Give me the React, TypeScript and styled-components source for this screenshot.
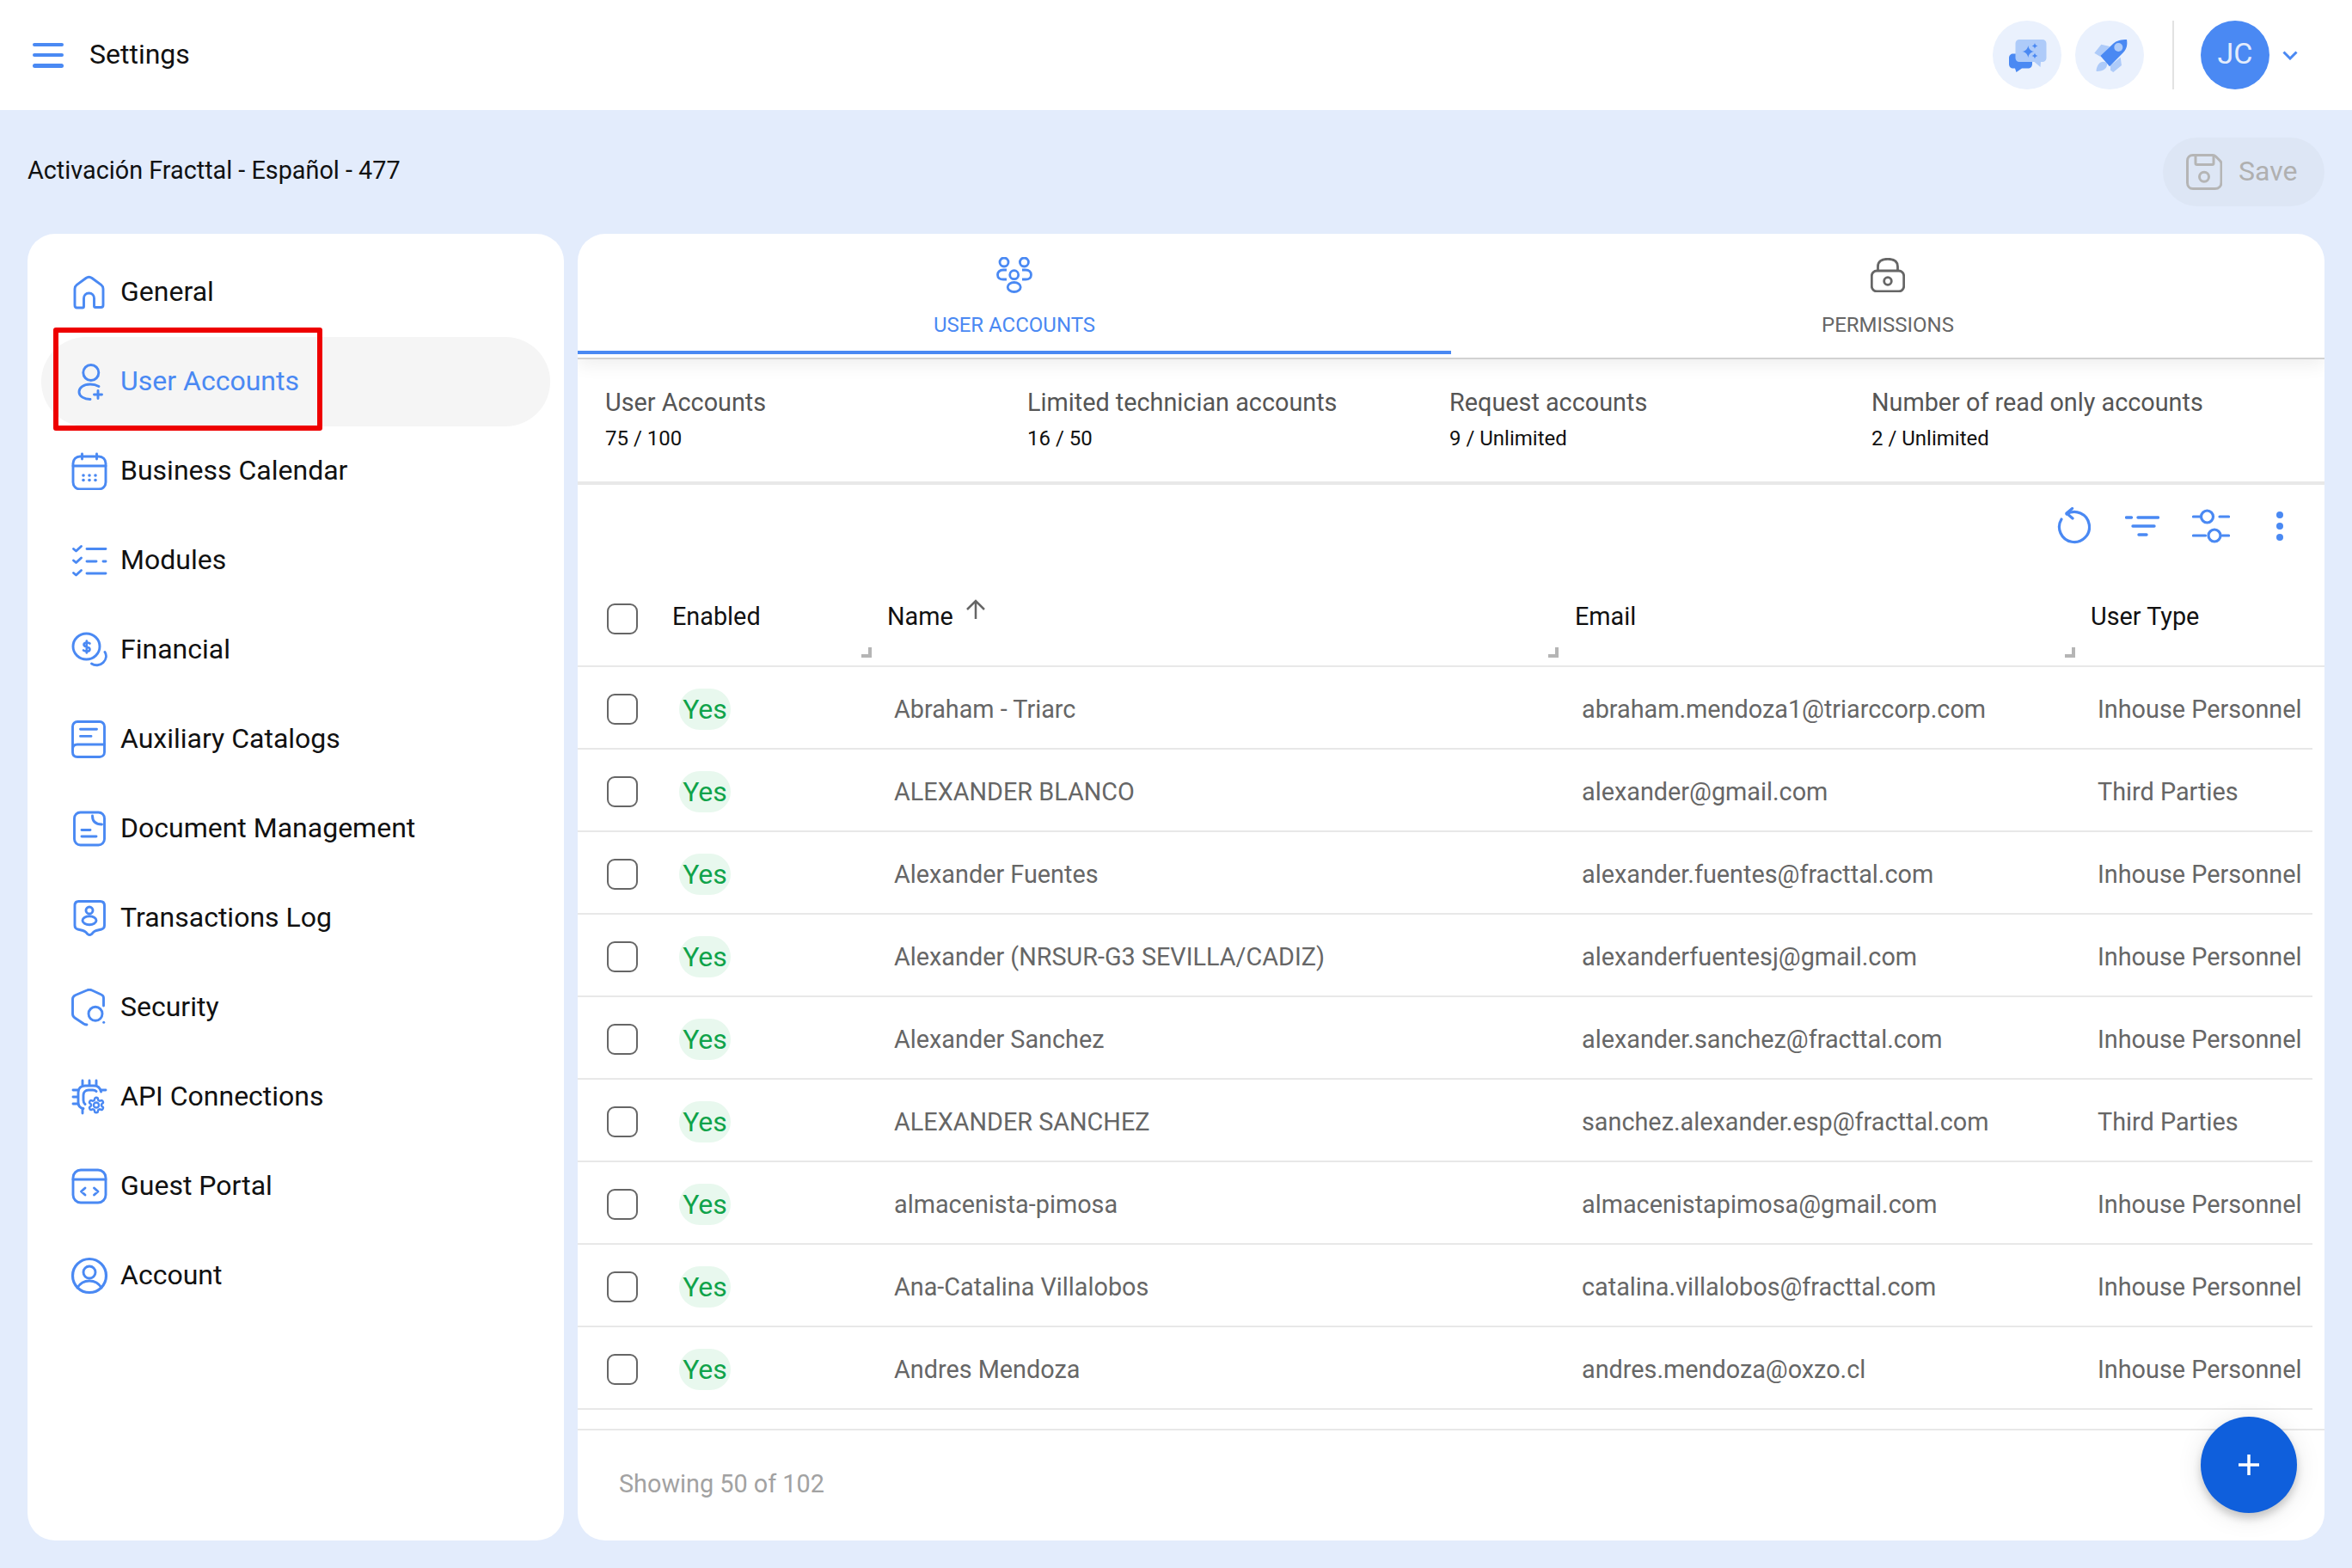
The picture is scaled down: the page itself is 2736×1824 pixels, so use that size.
import React from "react";
import styled, { createGlobalStyle } from "styled-components";

const BLUE = "#4a89f3";

const GlobalStyle = createGlobalStyle`
  html, body {
    margin: 0;
    padding: 0;
    width: 2736px;
    height: 1824px;
    overflow: hidden;
    background: #e3ecfc;
    font-family: Roboto, "Liberation Sans", sans-serif;
  }
  * { box-sizing: border-box; }
`;

const Line = ({ children, size = 44 }: { children: React.ReactNode; size?: number }) => (
  <svg width={size} height={size} viewBox={`0 0 ${size} ${size}`} fill="none" stroke="currentColor" strokeWidth="2.900" strokeLinecap="round" strokeLinejoin="round">
    {children}
  </svg>
);

const HomeIcon = () => (
  <Line>
    <path d="M5 37V18c0-2 .8-3.400 2.300-4.600L18 5.500c2.400-1.800 4.600-1.800 7 0l10.700 7.900c1.500 1.200 2.300 2.600 2.300 4.600v19c0 1.500-1 2.500-2.500 2.500H29c-1 0-1.500-.5-1.500-1.500V29c0-3.500-2.500-6-6-6s-6 2.500-6 6v9.500c0 1-.5 1.500-1.500 1.500H7.500C6 40 5 39 5 37z" />
  </Line>
);
const UserPlusIcon = () => (
  <Line>
    <circle cx="23.800" cy="11.500" r="9" />
    <path d="M33 27.500c-3-1.700-6.500-2.500-10-2.500-8 0-13 4-13 9s6 8.500 13 8.500" />
    <path d="M32 32.500v9M27.500 37h9" />
  </Line>
);
const CalendarIcon = () => (
  <Line>
    <rect x="3" y="5" width="38" height="38" rx="8" />
    <path d="M3 16h38M13.500 2v6M30.500 2v6" />
    <g fill="currentColor" stroke="none">
      <circle cx="15" cy="27" r="1.800" /><circle cx="22" cy="27" r="1.800" /><circle cx="29" cy="27" r="1.800" />
      <circle cx="15" cy="32.500" r="1.800" /><circle cx="22" cy="32.500" r="1.800" /><circle cx="29" cy="32.500" r="1.800" />
    </g>
  </Line>
);
const ChecklistIcon = () => (
  <Line>
    <path d="M3.500 8.500l3 2.500 6-5.500M3.500 22l3 2.500 6-5.500M3.500 36.500l3 2.500 6-5.500" />
    <path d="M19 8.500h22M19 23h11M38 23h3M19 37h22" />
  </Line>
);
const CoinIcon = () => (
  <Line>
    <ellipse cx="18.500" cy="18" rx="15.500" ry="15" />
    <path d="M22.500 14.500c-1.800-1.500-7-1.700-7 1.500s7 2 7 5.200-5.300 3-7.500 1.300M18.800 11.500v14" strokeWidth="2.600" />
    <path d="M40 24.500c2.300 3.500 1.700 8.500-2 12.200s-9.500 4-13.500 1.300" />
  </Line>
);
const CatalogIcon = () => (
  <Line>
    <path d="M8 1.500h26c3 0 5.500 2.500 5.500 5.500v30c0 3.500-2.500 5.500-5.500 5.500H8c-3.500 0-5.500-2-5.500-5.500V7c0-3 2.500-5.500 5.500-5.500z" />
    <path d="M2.500 33.500c0-3.500 2-5.500 5.500-5.500h31.500" />
    <path d="M11.500 10.200h19M11.500 18.400h12.500" />
  </Line>
);
const DocumentIcon = () => (
  <Line>
    <rect x="4.500" y="3" width="35" height="38" rx="7" />
    <path d="M25.500 7c0 6 3.500 10 11 10" fill="none" />
    <path d="M13 23.500h10M13 31h17" />
  </Line>
);
const LogIcon = () => (
  <Line>
    <path d="M9.500 2.500h25c3 0 5 1.500 5 5v23c0 2.500-1.500 4-3.500 4.500l-6 1.500c-1.500.4-2.500 1-3.500 2l-2 2.200c-1.500 1.200-3 1.200-4.500 0l-2-2.200c-1-1-2-1.600-3.500-2l-6-1.500c-2-.5-3.500-2-3.500-4.500v-23c0-3.500 2-5 4.500-5z" />
    <circle cx="22" cy="13" r="4" />
    <ellipse cx="22" cy="24.700" rx="8" ry="5" />
  </Line>
);
const ShieldIcon = () => (
  <Line>
    <path d="M38.500 20V11c0-2-1-3.300-2.700-4L25 2c-2-.9-4-.9-6 0L6 7.500c-2.200 1-3.500 2.500-3.500 4.500v17.500c0 2 1 3.500 2.500 4.500l10.500 7c1 .6 2 1 3.500 1" />
    <circle cx="29" cy="29.300" r="8" />
    <circle cx="38.700" cy="39.300" r="1.500" fill="currentColor" stroke="none" />
  </Line>
);
const ApiIcon = () => (
  <Line>
    <path d="M35.500 16c-1-4.500-3.500-7-8-7H17c-5 0-8 3-8 8v11c0 4.500 2 7 6 7.500" />
    <path d="M30 15.500c-1-1-2.500-1.500-4-1.500h-5c-3.500 0-6 2.500-6 6v6c0 2 .7 3.500 2 4.500" />
    <path d="M14 3v5M22 3v5M30 3v5M3 14h5M3 22h5M3 30h5M36 14h5M14 36v5" />
    <g transform="translate(19.500 21) scale(.875)">
      <path fill="#fff" strokeWidth="2.800" d="M12.220 2h-.44a2 2 0 0 0-2 2v.18a2 2 0 0 1-1 1.730l-.43.250a2 2 0 0 1-2 0l-.15-.08a2 2 0 0 0-2.730.73l-.22.380a2 2 0 0 0 .73 2.730l.15.100a2 2 0 0 1 1 1.720v.510a2 2 0 0 1-1 1.740l-.15.090a2 2 0 0 0-.73 2.730l.22.380a2 2 0 0 0 2.730.73l.15-.08a2 2 0 0 1 2 0l.43.250a2 2 0 0 1 1 1.730V20a2 2 0 0 0 2 2h.44a2 2 0 0 0 2-2v-.18a2 2 0 0 1 1-1.730l.43-.25a2 2 0 0 1 2 0l.15.080a2 2 0 0 0 2.730-.73l.22-.39a2 2 0 0 0-.73-2.730l-.15-.08a2 2 0 0 1-1-1.740v-.5a2 2 0 0 1 1-1.740l.15-.09a2 2 0 0 0 .73-2.730l-.22-.38a2 2 0 0 0-2.730-.73l-.15.080a2 2 0 0 1-2 0l-.43-.25a2 2 0 0 1-1-1.730V4a2 2 0 0 0-2-2z" />
      <circle cx="12" cy="12" r="3.500" strokeWidth="2.800" />
    </g>
  </Line>
);
const PortalIcon = () => (
  <Line>
    <rect x="3" y="3" width="38" height="38" rx="9" />
    <path d="M3 14h38M17 24l-4.500 4 4.500 4M27.500 24l4.500 4-4.500 4" />
  </Line>
);
const AccountIcon = () => (
  <Line>
    <circle cx="22" cy="22" r="19.500" strokeWidth="3.200" />
    <circle cx="22" cy="18" r="7" />
    <path d="M8 36c3-5 8-8 14-8s11 3 14 8" />
  </Line>
);

const ChatBadge = () => (
  <svg width="80" height="80" viewBox="0 0 80 80">
    <path fill={BLUE} d="M24 38.500h17c3 0 5 2 5 5v7c0 3-2 5-5 5H34l-6.500 4.500-1.500-4.500h-2c-3 0-5-2-5-5v-7c0-3 2-5 5-5z" />
    <path fill="#aecbf9" d="M31 22h27c2.500 0 4.500 2 4.500 4.500v17c0 2.500-2 4.500-4.500 4.500h-2l-.5 6-7-6H31c-2.500 0-4.500-2-4.500-4.500v-17c0-2.500 2-4.500 4.500-4.500z" />
    <g fill={BLUE}>
      <path d="M41.300 29c.8 4.200 2.800 6.200 7 7-4.200.8-6.200 2.800-7 7-.8-4.200-2.800-6.200-7-7 4.200-.8 6.200-2.800 7-7z" />
      <path d="M49 26c.4 2 1.400 3 3.400 3.400-2 .4-3 1.400-3.400 3.400-.4-2-1.400-3-3.400-3.400 2-.4 3-1.400 3.400-3.400z" />
      <path d="M49 37.600c.4 2 1.400 3 3.400 3.400-2 .4-3 1.400-3.400 3.400-.4-2-1.400-3-3.400-3.400 2-.4 3-1.400 3.400-3.400z" />
    </g>
  </svg>
);
const RocketBadge = () => (
  <svg width="80" height="80" viewBox="0 0 80 80">
    <path fill="#aecbf9" d="M22.300 37.700 30.300 27.700 40.300 30 29 41.700zM52.700 42.700 54 52 44.300 60 41 57.700 41 52zM35.500 48.500c-5-2.500-10 1.500-11 9.500 0 1 .5 1.200 1.500 1 5-.5 10-2 11-7 .3-1.500 0-2.500-1.500-3.500z" />
    <path fill={BLUE} d="M29.300 41 44 27c4-4 10-5 16-5 1 6 0 11-4 15L40 53.300z" />
    <circle cx="50.300" cy="31" r="5" fill="#aecbf9" />
  </svg>
);

const SaveIcon = () => (
  <svg width="42" height="42" viewBox="0 0 42 42" fill="none" stroke="#b5b5b5" strokeWidth="3" strokeLinejoin="round">
    <path d="M8 1.500h23c1.500 0 2.500.5 3.500 1.500l5 5c1 1 1.500 2 1.500 3.500V33c0 4.500-3 7.500-7.500 7.500H8c-4 0-6.500-3-6.500-7V8c0-4 2.500-6.500 6.500-6.500z" />
    <path d="M11 2v9c0 1 .5 1.500 1.500 1.500h18c1 0 1.500-.5 1.500-1.500V2" />
    <circle cx="21" cy="26.700" r="5.500" />
  </svg>
);

const UsersTabIcon = () => (
  <svg width="42" height="42" viewBox="0 0 42 42" fill="none" stroke={BLUE} strokeWidth="2.800">
    <circle cx="9" cy="6" r="5" /><circle cx="32.400" cy="6" r="5" />
    <circle cx="20.700" cy="20.700" r="5" />
    <ellipse cx="20.700" cy="35" rx="7.500" ry="5.500" />
    <path d="M12 15H8c-4 0-6.500 2.500-6.500 5.700S4 26 8 26h4" />
    <path d="M30 15h4c4 0 6.500 2.500 6.500 5.700S38 26 34 26h-4" />
  </svg>
);
const LockTabIcon = () => (
  <svg width="40" height="40" viewBox="0 0 40 40" fill="none" stroke="#666" strokeWidth="2.800">
    <rect x="1.300" y="15" width="37.400" height="24" rx="6" />
    <path d="M8.500 15V10C8.500 4 13 1.300 20 1.300S31.500 4 31.500 10v5" />
    <circle cx="20" cy="27" r="4.300" />
  </svg>
);

const ResetIcon = () => (
  <svg width="40" height="44" viewBox="0 0 40 44" fill="none" stroke={BLUE} strokeWidth="3.200" strokeLinecap="round" strokeLinejoin="round">
    <path d="M12 8A17.500 17.500 0 1 1 6 14" />
    <path d="M18.600 1.500 12 7l7 6" />
  </svg>
);
const FilterIcon = () => (
  <svg width="40" height="24" viewBox="0 0 40 24" fill="none" stroke={BLUE} strokeWidth="3.400" strokeLinecap="round">
    <path d="M1.500 2h6M15 2h23.500M9 12h25M16 22h9" />
  </svg>
);
const SlidersIcon = () => (
  <svg width="44" height="40" viewBox="0 0 44 40" fill="none" stroke={BLUE} strokeWidth="3.200" strokeLinecap="round">
    <path d="M1.500 9h9M32 9h10.500M1.500 31h14M35 31h7.500" />
    <circle cx="17.500" cy="9" r="7" /><circle cx="26" cy="31" r="7" />
  </svg>
);
const DotsIcon = () => (
  <svg width="8" height="34" viewBox="0 0 8 34" fill={BLUE}>
    <circle cx="4" cy="4" r="4" /><circle cx="4" cy="17" r="4" /><circle cx="4" cy="30" r="4" />
  </svg>
);

const Page = styled.div`
  width: 2736px;
  height: 1824px;
  display: flex;
  flex-direction: column;
  background: #e3ecfc;
  color: #111;
`;

const TopBar = styled.header`
  height: 128px;
  background: #fff;
  display: flex;
  align-items: center;
  padding: 0 63px 0 38px;
`;
const Burger = styled.div`
  width: 36px;
  height: 29px;
  display: flex;
  flex-direction: column;
  justify-content: space-between;
  span {
    display: block;
    height: 4.500px;
    border-radius: 3px;
    background: ${BLUE};
  }
`;
const PageTitle = styled.div`
  margin-left: 30px;
  padding-bottom: 3px;
  font-size: 32px;
  flex: 1;
`;
const Badge = styled.div`
  width: 80px;
  height: 80px;
  border-radius: 50%;
  background: #eaf1fd;
  margin-right: 16px;
  svg { display: block; }
`;
const Divider = styled.div`
  width: 2px;
  height: 80px;
  background: #e2e2e2;
  margin: 0 31px 0 17px;
`;
const Avatar = styled.div`
  width: 80px;
  height: 80px;
  border-radius: 50%;
  background: ${BLUE};
  color: #e3ecfc;
  font-size: 34px;
  display: flex;
  align-items: center;
  justify-content: center;
  padding-bottom: 4px;
`;
const Chevron = styled.svg`
  margin-left: 15px;
`;

const SubBar = styled.div`
  height: 144px;
  display: flex;
  align-items: center;
  justify-content: space-between;
  padding: 0 32px;
`;
const Company = styled.div`
  font-size: 28.800px;
  padding-bottom: 4px;
`;
const SaveButton = styled.button`
  width: 188px;
  height: 80px;
  border: 0;
  border-radius: 40px;
  background: #dde6f5;
  color: #b0b0b0;
  font: 32px Roboto, sans-serif;
  display: flex;
  align-items: center;
  gap: 19px;
  padding: 0 0 0 27px;
  span {
    padding-bottom: 3px;
  }
`;

const Panels = styled.div`
  height: 1520px;
  display: grid;
  grid-template-columns: 624px 2032px;
  gap: 16px;
  padding: 0 32px;
`;

const SideCard = styled.nav`
  background: #fff;
  border-radius: 32px;
  padding: 16px 16px 0 16px;
`;
const NavRow = styled.div<{ $active?: boolean }>`
  position: relative;
  height: 104px;
  border-radius: 52px;
  display: flex;
  align-items: center;
  gap: 14px;
  padding-left: 34px;
  font-size: 32px;
  color: ${(p) => (p.$active ? BLUE : "#111")};
  background: ${(p) => (p.$active ? "#f5f5f5" : "transparent")};
  span {
    padding-bottom: 3px;
  }
  svg { color: ${BLUE}; display: block; flex: none; }
`;
const RedMark = styled.div`
  position: absolute;
  left: 14px;
  top: -11px;
  width: 313px;
  height: 120px;
  border: 6px solid #ee0000;
  border-radius: 3px;
`;

const MainCard = styled.section`
  position: relative;
  background: #fff;
  border-radius: 32px;
  display: flex;
  flex-direction: column;
  overflow: hidden;
`;
const TabStrip = styled.div`
  height: 146px;
  flex: none;
  display: grid;
  grid-template-columns: 1fr 1fr;
  border-bottom: 2px solid #d2d2d2;
  box-shadow: 0 6px 20px rgba(0, 0, 0, 0.07);
`;
const Tab = styled.div<{ $active?: boolean }>`
  height: 140px;
  border-bottom: 4px solid ${(p) => (p.$active ? BLUE : "transparent")};
  display: flex;
  flex-direction: column;
  align-items: center;
  padding-top: ${(p) => (p.$active ? 27 : 28)}px;
  color: ${(p) => (p.$active ? BLUE : "#666")};
  font-size: 24px;
  span {
    margin-top: ${(p) => (p.$active ? 22 : 23)}px;
    line-height: 30px;
    text-transform: uppercase;
  }
  svg { display: block; }
`;

const StatsRow = styled.div`
  height: 146px;
  flex: none;
  display: grid;
  grid-template-columns: repeat(4, 491px);
  padding: 32px 0 0 32px;
  border-bottom: 4px solid #e8e8e8;
`;
const StatTitle = styled.div`
  font-size: 28.800px;
  line-height: 36px;
  color: #555;
`;
const StatValue = styled.div`
  margin-top: 6px;
  font-size: 24px;
  line-height: 36px;
  color: #111;
`;

const Toolbar = styled.div`
  height: 96px;
  flex: none;
  display: flex;
  justify-content: flex-end;
  padding-right: 12px;
`;
const ToolButton = styled.div`
  width: 80px;
  display: flex;
  align-items: center;
  justify-content: center;
`;

const TableArea = styled.div`
  flex: 1;
  overflow: hidden;
`;
const COLUMNS = "98px 248px 799px 601px 1fr";
const HeadRow = styled.div`
  display: grid;
  grid-template-columns: ${COLUMNS};
  height: 116px;
  align-items: center;
  border-bottom: 2px solid #e8e8e8;
  font-size: 28.800px;
  color: #111;
`;
const HeadCell = styled.div<{ $grip?: boolean; $inset?: number }>`
  position: relative;
  height: 100%;
  display: flex;
  align-items: center;
  padding-left: ${(p) => p.$inset ?? 14}px;
  &::after {
    content: "";
    display: ${(p) => (p.$grip ? "block" : "none")};
    position: absolute;
    right: 4px;
    bottom: 9px;
    width: 12px;
    height: 12px;
    background:
      linear-gradient(#b5b5b5, #b5b5b5) right top / 4px 100% no-repeat,
      linear-gradient(#b5b5b5, #b5b5b5) left bottom / 100% 4px no-repeat;
  }
`;
const SortArrow = styled.svg`
  margin: -16px 0 0 14px;
`;
const Check = styled.div<{ $head?: boolean }>`
  width: 36px;
  height: 36px;
  margin-left: 34px;
  margin-top: ${(p) => (p.$head ? 5 : 0)}px;
  border: 2px solid #666;
  border-radius: 9px;
  background: #fff;
`;
const BodyRow = styled.div`
  display: grid;
  grid-template-columns: ${COLUMNS};
  height: 96px;
  padding-top: 4px;
  margin-right: 14px;
  align-items: center;
  border-bottom: 2px solid #e8e8e8;
  font-size: 28.800px;
  color: #666;
`;
const Cell = styled.div<{ $inset?: number }>`
  padding-left: ${(p) => p.$inset ?? 22}px;
  white-space: nowrap;
`;
const YesPill = styled.span`
  display: inline-flex;
  align-items: center;
  justify-content: center;
  width: 60px;
  height: 48px;
  margin-left: -2px;
  border-radius: 24px;
  background: #e8f8ee;
  color: #0fa34a;
  font-size: 32px;
`;

const Footer = styled.div`
  height: 130px;
  flex: none;
  border-top: 2px solid #e8e8e8;
  display: flex;
  align-items: center;
  padding: 0 0 5px 48px;
  font-size: 28.800px;
  color: #a2a2a2;
`;
const Fab = styled.div`
  position: absolute;
  right: 32px;
  bottom: 32px;
  width: 112px;
  height: 112px;
  border-radius: 50%;
  background: #0f5fdc;
  box-shadow: 0 6px 10px rgba(0, 0, 0, 0.18), 0 4px 30px rgba(0, 0, 0, 0.1);
  display: flex;
  align-items: center;
  justify-content: center;
`;

const navItems = [
  { label: "General", Icon: HomeIcon },
  { label: "User Accounts", Icon: UserPlusIcon, active: true },
  { label: "Business Calendar", Icon: CalendarIcon },
  { label: "Modules", Icon: ChecklistIcon },
  { label: "Financial", Icon: CoinIcon },
  { label: "Auxiliary Catalogs", Icon: CatalogIcon },
  { label: "Document Management", Icon: DocumentIcon },
  { label: "Transactions Log", Icon: LogIcon },
  { label: "Security", Icon: ShieldIcon },
  { label: "API Connections", Icon: ApiIcon },
  { label: "Guest Portal", Icon: PortalIcon },
  { label: "Account", Icon: AccountIcon },
];

const stats = [
  ["User Accounts", "75 / 100"],
  ["Limited technician accounts", "16 / 50"],
  ["Request accounts", "9 / Unlimited"],
  ["Number of read only accounts", "2 / Unlimited"],
];

const users = [
  ["Abraham - Triarc", "abraham.mendoza1@triarccorp.com", "Inhouse Personnel"],
  ["ALEXANDER BLANCO", "alexander@gmail.com", "Third Parties"],
  ["Alexander Fuentes", "alexander.fuentes@fracttal.com", "Inhouse Personnel"],
  ["Alexander (NRSUR-G3 SEVILLA/CADIZ)", "alexanderfuentesj@gmail.com", "Inhouse Personnel"],
  ["Alexander Sanchez", "alexander.sanchez@fracttal.com", "Inhouse Personnel"],
  ["ALEXANDER SANCHEZ", "sanchez.alexander.esp@fracttal.com", "Third Parties"],
  ["almacenista-pimosa", "almacenistapimosa@gmail.com", "Inhouse Personnel"],
  ["Ana-Catalina Villalobos", "catalina.villalobos@fracttal.com", "Inhouse Personnel"],
  ["Andres Mendoza", "andres.mendoza@oxzo.cl", "Inhouse Personnel"],
];

const App = () => {
  return (
    <Page>
      <GlobalStyle />
      <TopBar>
        <Burger><span /><span /><span /></Burger>
        <PageTitle>Settings</PageTitle>
        <Badge><ChatBadge /></Badge>
        <Badge><RocketBadge /></Badge>
        <Divider />
        <Avatar>JC</Avatar>
        <Chevron width="18" height="11" viewBox="0 0 18 11" fill="none" stroke={BLUE} strokeWidth="3">
          <path d="M1.500 1.500 9 9l7.500-7.500" />
        </Chevron>
      </TopBar>

      <SubBar>
        <Company>Activación Fracttal - Español - 477</Company>
        <SaveButton><SaveIcon /><span>Save</span></SaveButton>
      </SubBar>

      <Panels>
        <SideCard>
          {navItems.map(({ label, Icon, active }) => (
            <NavRow key={label} $active={active}>
              <Icon />
              <span>{label}</span>
              {active && <RedMark />}
            </NavRow>
          ))}
        </SideCard>

        <MainCard>
          <TabStrip>
            <Tab $active><UsersTabIcon /><span>User Accounts</span></Tab>
            <Tab><LockTabIcon /><span>Permissions</span></Tab>
          </TabStrip>

          <StatsRow>
            {stats.map(([title, value]) => (
              <div key={title}>
                <StatTitle>{title}</StatTitle>
                <StatValue>{value}</StatValue>
              </div>
            ))}
          </StatsRow>

          <Toolbar>
            <ToolButton><ResetIcon /></ToolButton>
            <ToolButton><FilterIcon /></ToolButton>
            <ToolButton><SlidersIcon /></ToolButton>
            <ToolButton><DotsIcon /></ToolButton>
          </Toolbar>

          <TableArea>
            <HeadRow>
              <Check $head />
              <HeadCell $grip $inset={12}>Enabled</HeadCell>
              <HeadCell $grip>
                Name
                <SortArrow width="24" height="24" viewBox="0 0 24 24" fill="none" stroke="#666" strokeWidth="2.500">
                  <path d="M12 23V2M2 12 12 2l10 10" />
                </SortArrow>
              </HeadCell>
              <HeadCell $grip $inset={15}>Email</HeadCell>
              <HeadCell>User Type</HeadCell>
            </HeadRow>
            {users.map(([name, email, type]) => (
              <BodyRow key={email}>
                <Check />
                <Cell><YesPill>Yes</YesPill></Cell>
                <Cell>{name}</Cell>
                <Cell $inset={23}>{email}</Cell>
                <Cell>{type}</Cell>
              </BodyRow>
            ))}
          </TableArea>

          <Footer>Showing 50 of 102</Footer>
          <Fab>
            <svg width="26" height="26" viewBox="0 0 26 26" stroke="#fff" strokeWidth="3.500">
              <path d="M13 1v24M1 13h24" />
            </svg>
          </Fab>
        </MainCard>
      </Panels>
    </Page>
  );
};

export default App;
